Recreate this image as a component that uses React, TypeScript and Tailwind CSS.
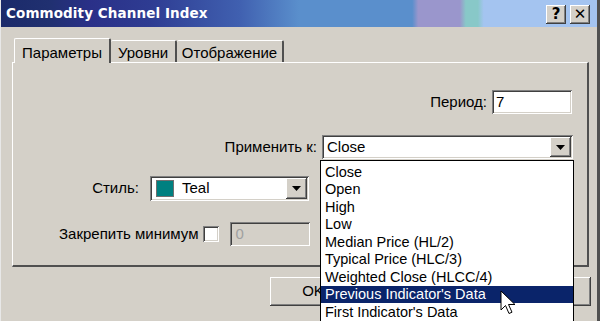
import React from 'react';

const sunken =
  'shadow-[inset_1px_1px_0_#808080,inset_-1px_-1px_0_#ffffff,inset_2px_2px_0_#404040,inset_-2px_-2px_0_#d4d0c8]';
const raised =
  'shadow-[inset_-1px_-1px_0_#404040,inset_1px_1px_0_#ffffff,inset_-2px_-2px_0_#808080,inset_2px_2px_0_#d4d0c8]';

function ArrowButton() {
  return (
    <div className={`w-[21px] h-full bg-[#d4d0c8] flex items-center justify-center ${raised}`}>
      <svg width="9" height="5" viewBox="0 0 9 5">
        <path d="M0 0h9L4.5 5z" fill="#000" />
      </svg>
    </div>
  );
}

function TitleButton({ children }: { children: React.ReactNode }) {
  return (
    <div
      className={`w-[20px] h-[19px] bg-[#d4d0c8] flex items-center justify-center text-[15px] font-bold leading-none text-black ${raised}`}
      style={{ fontFamily: '"DejaVu Sans", sans-serif' }}
    >
      {children}
    </div>
  );
}

const items = [
  'Close',
  'Open',
  'High',
  'Low',
  'Median Price (HL/2)',
  'Typical Price (HLC/3)',
  'Weighted Close (HLCC/4)',
  "Previous Indicator's Data",
  "First Indicator's Data",
];

export default function App() {
  return (
    <div
      className="relative w-[600px] h-[321px] overflow-hidden bg-[#d4d0c8] text-[15px] text-black flex flex-col border-l-[1px] border-l-[#e8e8e8] border-r-[3px] border-r-[#505050]"
      style={{ fontFamily: '"Liberation Sans", Arial, sans-serif' }}
    >
      {/* title bar */}
      <div className="h-[27px] shrink-0 flex items-center pl-[5px] pr-[7px] bg-[linear-gradient(90deg,#1b2a6a_0%,#203070_8%,#2a3088_15%,#2e3c92_25%,#4060b0_40%,#5a8fcc_50%,#5a8fcc_69%,#9a96cc_70%,#9a96cc_77%,#88c8c8_78%,#88c8c8_80%,#a4c4f0_81%,#a4c4f0_100%)]">
        <span
          className="text-white font-bold text-[13.5px] tracking-[0.1px]"
          style={{ fontFamily: '"DejaVu Sans", Verdana, sans-serif' }}
        >
          Commodity Channel Index
        </span>
        <div className="ml-auto flex gap-[4px] pt-[2px]">
          <TitleButton>?</TitleButton>
          <TitleButton>✕</TitleButton>
        </div>
      </div>

      {/* tabs */}
      <div className="flex items-end pl-[13px] mt-[10px] h-[25px]">
        <div className="h-[25px] w-[97px] text-center pt-[3px] bg-[#d4d0c8] border-l border-t border-white border-r-2 border-r-[#505050] rounded-t-[2px] relative z-10 -mb-px">
          Параметры
        </div>
        <div className="h-[22px] w-[66px] text-center pt-[1px] border-t border-white border-r-2 border-r-[#505050] rounded-t-[2px]">
          Уровни
        </div>
        <div className="h-[22px] w-[107px] text-center pt-[1px] border-t border-white border-r-2 border-r-[#505050] rounded-t-[2px]">
          Отображение
        </div>
      </div>

      {/* tab panel */}
      <div className="ml-[11px] w-[577px] h-[205px] border-l border-t border-white border-r-2 border-r-[#505050] border-b-2 border-b-[#505050] pt-[27px] flex flex-col">
        <div className="flex items-center justify-end pr-[15px] h-[24px]">
          <span className="mr-[5px]">Период:</span>
          <div className={`w-[80px] h-[24px] bg-white pl-[4px] flex items-center ${sunken}`}>7</div>
        </div>

        <div className="flex items-center justify-end pr-[14px] h-[24px] mt-[21px]">
          <span className="mr-[5px]">Применить к:</span>
          <div className={`w-[251px] h-[24px] bg-white flex items-stretch p-[2px] ${sunken}`}>
            <span className="flex-1 pl-[3px] flex items-center">Close</span>
            <ArrowButton />
          </div>
        </div>

        <div className="flex items-center h-[25px] mt-[17px]">
          <span className="w-[126px] text-right">Стиль:</span>
          <div className={`ml-[11px] w-[159px] h-[25px] bg-white flex items-stretch p-[2px] ${sunken}`}>
            <div className="w-[18px] h-[17px] bg-[#008080] ml-[4px] mt-[2px] border border-[#707070]" />
            <span className="flex-1 pl-[8px] flex items-center">Teal</span>
            <ArrowButton />
          </div>
        </div>

        <div className="flex items-center h-[24px] mt-[21px] pl-[46px]">
          <span>Закрепить минимум</span>
          <div className={`ml-[5px] w-[16px] h-[16px] bg-white ${sunken}`} />
          <div className={`ml-[11px] w-[80px] h-[24px] bg-[#d4d0c8] pl-[5px] flex items-center text-[#a0a0a0] ${sunken}`}>
            0
          </div>
        </div>
      </div>

      {/* buttons (mostly hidden under the open list) */}
      <div className="flex mt-[10px] h-[29px] pl-[269px] pr-[6px]">
        <div className={`w-[86px] h-[29px] flex items-center justify-center ${raised}`}>OK</div>
        <div className={`ml-auto w-[88px] h-[29px] ${raised}`} />
      </div>

      {/* open dropdown list */}
      <div className="absolute left-[319px] top-[160px] w-[254px] h-[170px] bg-white border border-black pt-[2px] text-[14.5px]">
        {items.map((it) => (
          <div
            key={it}
            className={`h-[17.5px] pl-[4px] flex items-center leading-none ${
              it === "Previous Indicator's Data" ? 'bg-[#0a246a] text-white' : ''
            }`}
          >
            {it}
          </div>
        ))}
      </div>

      {/* mouse pointer */}
      <svg className="absolute left-[499px] top-[290px]" width="16" height="26" viewBox="0 0 16 26">
        <path
          d="M1 1v19l4.5-4.5 3.5 8 3-1.3-3.5-7.7H15z"
          fill="#fff"
          stroke="#000"
          strokeWidth="1"
          strokeLinejoin="round"
        />
      </svg>
    </div>
  );
}
